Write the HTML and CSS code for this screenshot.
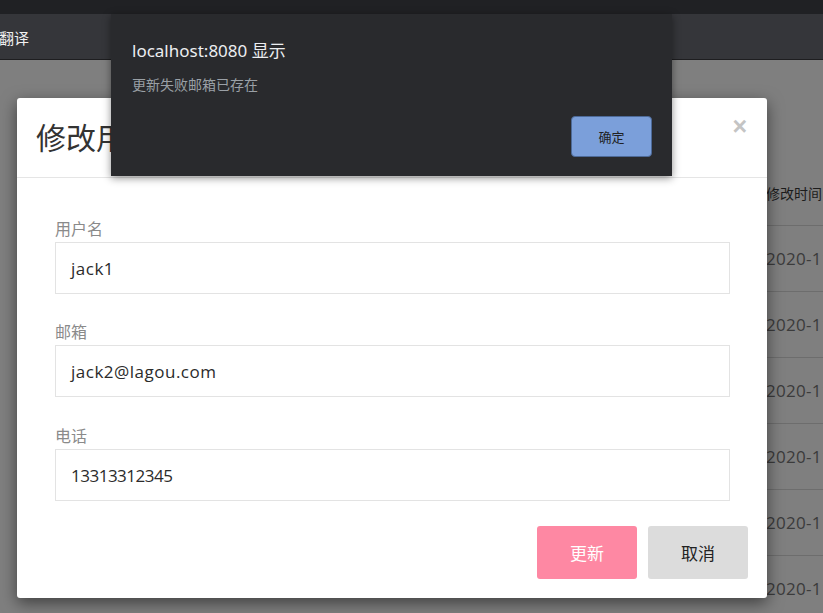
FILE: index.html
```html
<!DOCTYPE html>
<html lang="zh-CN">
<head>
<meta charset="utf-8">
<title>修改用户</title>
<link rel="stylesheet" href="styles.css">
</head>
<body>
<div class="tabbar"><span class="tab-title">index.html</span></div>
<div class="toolbar"><span class="translate">翻译</span></div>
<main class="page">
  <div class="table">
    <div class="row head">修改时间</div>
    <div class="row">2020-11-11</div>
    <div class="row">2020-11-11</div>
    <div class="row">2020-11-11</div>
    <div class="row">2020-11-11</div>
    <div class="row">2020-11-11</div>
    <div class="row">2020-11-11</div>
  </div>

  <div class="modal">
    <div class="modal-header">
      <h4 class="modal-title">修改用户</h4>
      <span class="close">&times;</span>
    </div>
    <div class="modal-body">
      <div class="group">
        <label class="label">用户名</label>
        <div class="input">jack1</div>
      </div>
      <div class="group">
        <label class="label">邮箱</label>
        <div class="input">jack2@lagou.com</div>
      </div>
      <div class="group">
        <label class="label">电话</label>
        <div class="input input-num">13313312345</div>
      </div>
    </div>
    <div class="modal-footer">
      <button class="btn btn-update">更新</button>
      <button class="btn btn-cancel">取消</button>
    </div>
  </div>
</main>

<div class="alert">
  <div class="alert-title">localhost:8080 显示</div>
  <div class="alert-msg">更新失败邮箱已存在</div>
  <div class="alert-actions"><button class="alert-ok">确定</button></div>
</div>
</body>
</html>
```
FILE: styles.css
```css
* { box-sizing: border-box; }
html, body { margin: 0; height: 100%; }
body {
  font-family: "Noto Sans CJK SC", "Noto Sans", sans-serif;
  background: #7f7f7f;
  overflow: hidden;
  position: relative;
}
.tabbar {
  height: 14px;
  background: #202124;
  overflow: hidden;
}
.tab-title {
  display: block;
  margin-top: -16px;
  margin-left: -8px;
  color: #8a8d92;
  font-family: "Liberation Sans", sans-serif;
  font-size: 17px;
  line-height: 20px;
}
.toolbar {
  height: 46px;
  background: #35363a;
  border-bottom: 1px solid #1e1e20;
  display: flex;
  align-items: center;
}
.translate {
  color: #f1f1f1;
  font-size: 15px;
  margin-left: -1px;
  margin-top: 2px;
}
.page {
  position: relative;
  height: 553px;
}
.table {
  margin-left: 766px;
  padding-top: 100px;
}
.row {
  height: 66px;
  border-bottom: 1px solid #6d6d6d;
  display: flex;
  align-items: center;
  white-space: nowrap;
  color: #3b3b3b;
  font-family: "Open Sans", sans-serif;
  font-size: 17px;
  letter-spacing: 0.3px;
}
.row.head {
  height: 66px;
  color: #1c1c1c;
  font-family: "Noto Sans CJK SC", sans-serif;
  font-size: 14px;
  letter-spacing: 0;
}
.modal {
  position: absolute;
  left: 17px;
  top: 38px;
  width: 750px;
  height: 500px;
  background: #fff;
  border-radius: 3px;
  box-shadow: 0 5px 16px rgba(0,0,0,0.5);
}
.modal-header {
  height: 80px;
  padding: 15px 19px;
  border-bottom: 1px solid #e5e5e5;
  display: flex;
  align-items: flex-start;
  justify-content: space-between;
}
.modal-title {
  margin: 0;
  font-size: 30px;
  font-weight: normal;
  line-height: 46px;
  color: #333;
}
.close {
  font-family: "Liberation Sans", sans-serif;
  font-size: 25px;
  font-weight: bold;
  color: #c4c4c4;
  line-height: 24px;
  margin-top: 1px;
  margin-right: 1px;
}
.modal-body {
  padding: 39px 37px 0 38px;
}
.group { margin-bottom: 26px; }
.group:last-child { margin-bottom: 0; padding-top: 1px; }
.label {
  display: block;
  font-size: 16px;
  line-height: 22px;
  color: #8a8a8a;
  margin-bottom: 3px;
}
.input {
  height: 52px;
  border: 1px solid #e3e3e3;
  padding: 0 15px;
  display: flex;
  align-items: center;
  font-family: "Open Sans", sans-serif;
  font-size: 17px;
  letter-spacing: 0.5px;
  color: #2b2b2b;
}
.input-num { letter-spacing: -0.5px; }
.modal-footer {
  display: flex;
  justify-content: flex-end;
  gap: 11px;
  padding: 25px 19px 0 0;
}
.btn {
  width: 100px;
  height: 53px;
  border: 0;
  border-radius: 3px;
  font-family: "Noto Sans CJK SC", sans-serif;
  font-size: 17px;
}
.btn-update { background: #fe88a3; color: #fff; }
.btn-cancel { background: #dcdcdc; color: #222; }

.alert {
  position: absolute;
  left: 111px;
  top: 14px;
  width: 561px;
  height: 162px;
  background: #292a2d;
  box-shadow: 0 2px 8px rgba(0,0,0,0.45);
  padding: 26px 20px 0 21px;
  display: flex;
  flex-direction: column;
}
.alert-title {
  color: #eceef1;
  font-size: 17px;
  line-height: 22px;
  font-family: "Noto Sans", "Noto Sans CJK SC", sans-serif;
}
.alert-msg {
  color: #9aa0a6;
  font-size: 14px;
  line-height: 20px;
  margin-top: 12px;
}
.alert-actions {
  display: flex;
  justify-content: flex-end;
  margin-top: 22px;
}
.alert-ok {
  width: 81px;
  height: 41px;
  background: #7b9fda;
  border: 1px solid #4d6a98;
  border-radius: 4px;
  color: #202124;
  font-family: "Noto Sans CJK SC", sans-serif;
  font-size: 13px;
}
```
